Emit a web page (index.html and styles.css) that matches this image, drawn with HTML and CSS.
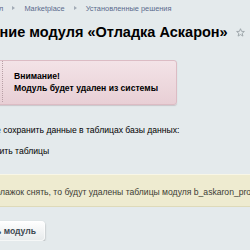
FILE: index.html
```html
<!DOCTYPE html>
<html lang="ru">
<head>
    <meta charset="UTF-8">
    <title>Удаление модуля</title>
    <link rel="stylesheet" href="styles.css">
</head>
<body>
    <div class="page">
        <!-- Breadcrumbs -->
        <div class="crumbs">
            <span class="crumb">Рабочий стол</span>
            <span class="crumb-arrow"></span>
            <span class="crumb">Marketplace</span>
            <span class="crumb-arrow"></span>
            <span class="crumb">Установленные решения</span>
        </div>

        <h1 class="page-title">
            Удаление модуля «Отладка Аскарон»
            <svg class="fav-star" width="9" height="9" viewBox="0 0 10 10">
                <path d="M5 0.8 L6.2 3.7 L9.3 3.9 L6.9 5.9 L7.7 9 L5 7.3 L2.3 9 L3.1 5.9 L0.7 3.9 L3.8 3.7 Z" fill="none" stroke="#98a1a6" stroke-width="1" stroke-linejoin="round"/>
            </svg>
        </h1>

        <!-- Warning message -->
        <div class="info-message">
            <div class="info-message-icon"></div>
            <div class="info-message-text">
                Внимание!<br>
                Модуль будет удален из системы
            </div>
        </div>

        <p class="save-text">Вы можете сохранить данные в таблицах базы данных:</p>
        <label class="save-check">
            <input type="checkbox" checked>
            <span>Сохранить таблицы</span>
        </label>

        <div class="note-bar">Если флажок снять, то будут удалены таблицы модуля b_askaron_pro1c и все данные</div>

        <button class="btn-delete" type="button">Удалить модуль</button>
    </div>
</body>
</html>
```

FILE: styles.css
```css
body {
    margin: 0;
    background-color: #e4eaec;
    font-family: "Liberation Sans", Arial, sans-serif;
    font-size: 8.6px;
    color: #000000;
    overflow: hidden;
}

/* page is scrolled a bit to the right */
.page {
    margin-left: -43px;
    width: 420px;
}

.crumbs {
    display: flex;
    align-items: center;
    height: 16px;
    font-size: 7.4px;
    color: #5a6b8c;
}

.crumb-arrow {
    width: 0;
    height: 0;
    margin: 0 9px;
    border-top: 2px solid transparent;
    border-bottom: 2px solid transparent;
    border-left: 3px solid #a2abb5;
}

.page-title {
    display: flex;
    align-items: center;
    margin: 7px 0 0;
    font-size: 14.5px;
    line-height: 18px;
    font-weight: bold;
    color: #000000;
}

.fav-star {
    margin-left: 8px;
}

.info-message {
    display: flex;
    width: 218px;
    margin-top: 19px;
    border: 1px solid #dcbcc4;
    border-radius: 3px;
    background: linear-gradient(#f3e3e7, #e8cfd5);
    box-shadow: 0 1px 1px rgba(120, 90, 100, 0.25);
}

.info-message-icon {
    width: 44px;
    margin: 0 0 2px;
    border-right: 1px dotted #b8a0a6;
}

.info-message-text {
    padding: 9px 0 10px 11px;
    font-weight: bold;
    line-height: 12px;
}

.save-text {
    margin: 19px 0 0;
    line-height: 12px;
}

.save-check {
    display: flex;
    align-items: center;
    margin-top: 9px;
    line-height: 12px;
}

.save-check input {
    width: 11px;
    height: 11px;
    margin: 0 2px 0 0;
}

.note-bar {
    margin-top: 17px;
    padding: 11px 0 8px 14px;
    border-top: 1px solid #f8f6e6;
    border-bottom: 1px solid #dedab9;
    background-color: #eeebd0;
    color: #3c3c34;
    line-height: 12px;
    white-space: nowrap;
}

.btn-delete {
    display: block;
    height: 20px;
    margin-top: 14px;
    padding: 0 9px;
    border: none;
    border-radius: 4px;
    background: linear-gradient(#ffffff, #e6eaeb);
    box-shadow: 0 1px 2px rgba(0, 0, 0, 0.35), inset 0 0 0 1px rgba(255, 255, 255, 0.6);
    font-family: "Liberation Sans", Arial, sans-serif;
    font-size: 8.6px;
    font-weight: bold;
    color: #3d4a52;
    cursor: pointer;
}
```
